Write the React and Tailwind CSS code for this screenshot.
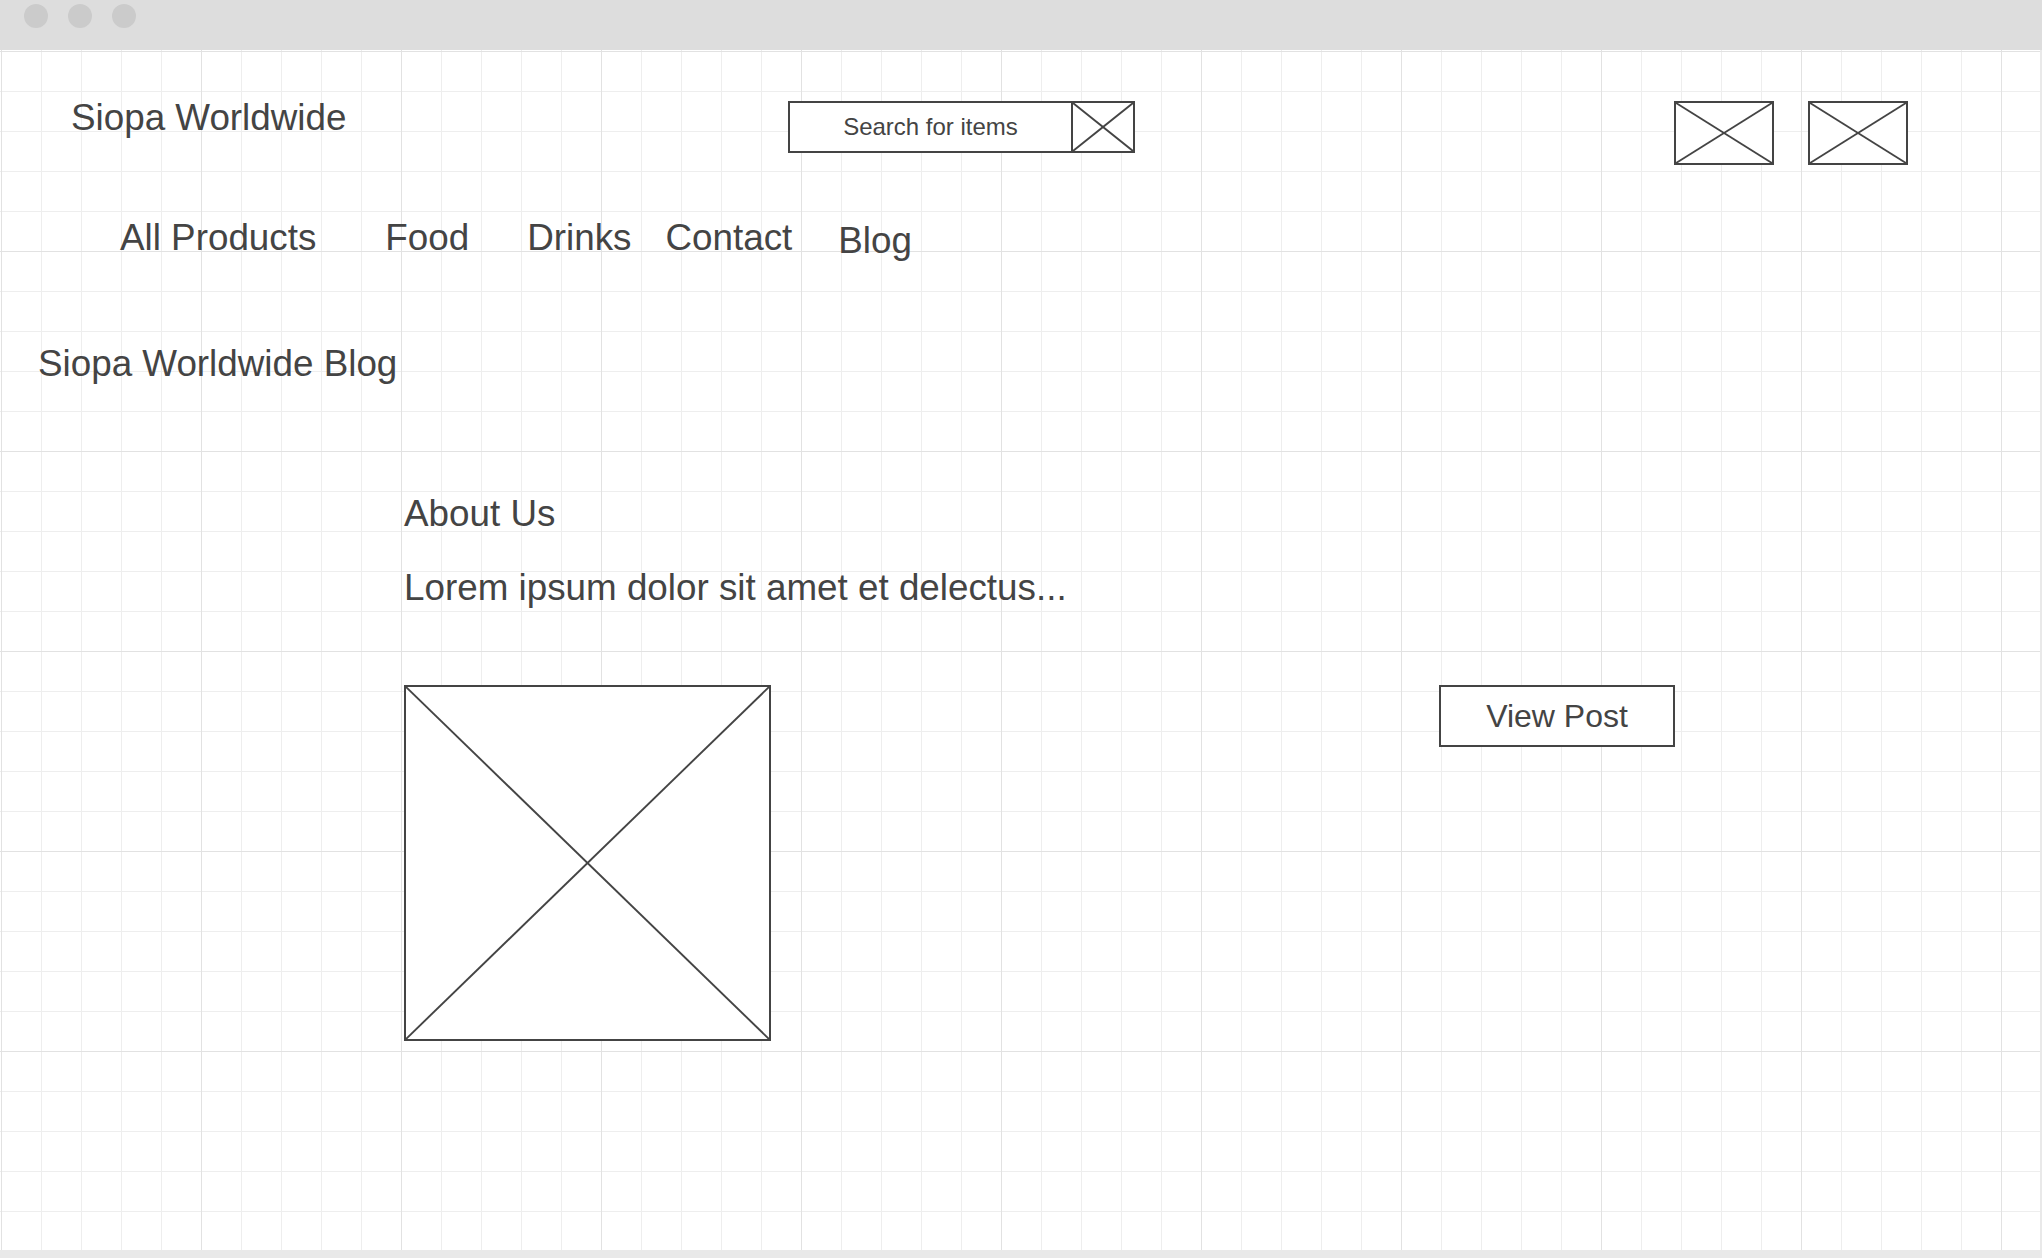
import React from 'react';

// Wireframe placeholder: a box with a cross drawn corner to corner
function Cross() {
  return (
    <svg className="absolute inset-0 w-full h-full" viewBox="0 0 100 100" preserveAspectRatio="none">
      <line x1="0" y1="0" x2="100" y2="100" stroke="#444" strokeWidth="1.9" vectorEffect="non-scaling-stroke" />
      <line x1="100" y1="0" x2="0" y2="100" stroke="#444" strokeWidth="1.9" vectorEffect="non-scaling-stroke" />
    </svg>
  );
}

function Placeholder({ className = '' }) {
  return (
    <div className={`relative bg-white border-2 border-[#444] ${className}`}>
      <Cross />
    </div>
  );
}

const navItems = [
  { label: 'All Products', cls: 'ml-[120px]' },
  { label: 'Food', cls: 'ml-[69px]' },
  { label: 'Drinks', cls: 'ml-[58px]' },
  { label: 'Contact', cls: 'ml-[34px]' },
  { label: 'Blog', cls: 'ml-[46px] mt-[3px]' }
];

export default function App() {
  return (
    <div className="w-[2042px] h-[1258px] bg-[#e9e9e9] overflow-hidden text-[#444] font-['Liberation_Sans',Arial,sans-serif]">
      {/* window title bar */}
      <div className="h-[50px] bg-[#dddddd] flex items-start gap-[20px] pl-[24px] pt-[4px]">
        <span className="w-[24px] h-[24px] rounded-full bg-[#cbcbcb]" />
        <span className="w-[24px] h-[24px] rounded-full bg-[#cbcbcb]" />
        <span className="w-[24px] h-[24px] rounded-full bg-[#cbcbcb]" />
      </div>

      {/* page canvas with grid */}
      <div className="w-[2040px] h-[1200px] bg-white bg-[linear-gradient(to_right,#e2e2e2_1px,transparent_1px),linear-gradient(to_bottom,#e2e2e2_1px,transparent_1px),linear-gradient(to_right,#eeeeee_1px,transparent_1px),linear-gradient(to_bottom,#eeeeee_1px,transparent_1px)] bg-[size:200px_200px,200px_200px,40px_40px,40px_40px] bg-[position:1px_1px]">
        {/* header */}
        <div className="h-[170px] pt-[50px] flex items-start">
          <div className="w-[788px] pl-[71px] text-[36.8px] leading-[36px]">Siopa Worldwide</div>
          <div className="w-[347px] h-[52px] mt-[1px] flex border-2 border-[#444] bg-white">
            <div className="flex-1 flex items-center justify-center text-[24px] leading-none">Search for items</div>
            <div className="relative w-[62px] h-full border-l-2 border-[#444]">
              <Cross />
            </div>
          </div>
          <div className="ml-[539px] mt-[1px] flex gap-[34px]">
            <Placeholder className="w-[100px] h-[64px]" />
            <Placeholder className="w-[100px] h-[64px]" />
          </div>
        </div>

        {/* nav */}
        <nav className="h-[36px] flex items-start text-[36.8px] leading-[36px]">
          {navItems.map(item => (
            <span key={item.label} className={item.cls}>{item.label}</span>
          ))}
        </nav>

        <h1 className="mt-[90px] pl-[38px] text-[36.8px] leading-[36px] font-normal">Siopa Worldwide Blog</h1>

        <div className="pl-[404px]">
          <h2 className="mt-[114px] text-[36.8px] leading-[36px] font-normal">About Us</h2>
          <p className="mt-[38px] text-[36.8px] leading-[36px]">Lorem ipsum dolor sit amet et delectus...</p>
        </div>

        <div className="mt-[79px] flex items-start">
          <Placeholder className="ml-[404px] w-[367px] h-[356px]" />
          <button
            type="button"
            className="ml-[668px] w-[236px] h-[62px] border-2 border-[#444] bg-white text-[32px] leading-none text-[#444] flex items-center justify-center"
          >
            View Post
          </button>
        </div>
      </div>
    </div>
  );
}
